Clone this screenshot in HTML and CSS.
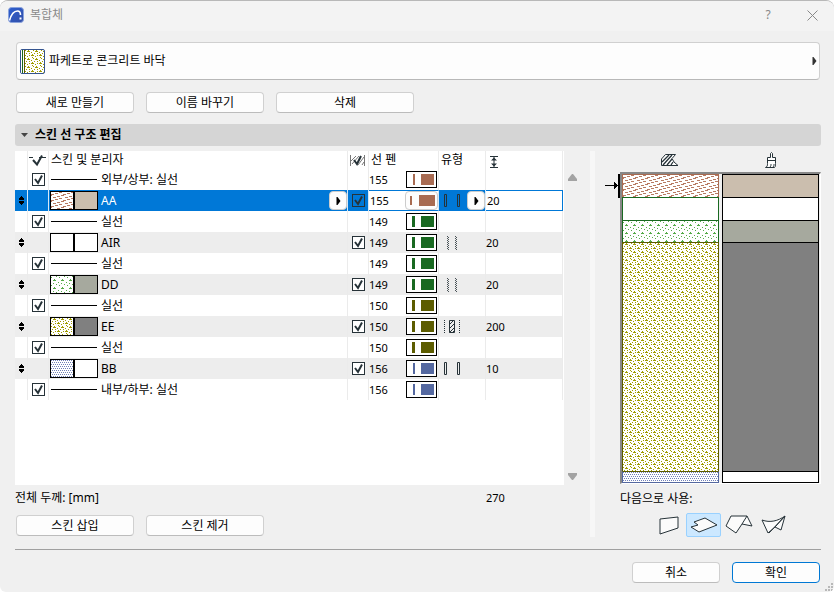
FILE: index.html
```html
<!DOCTYPE html>
<html lang="ko">
<head>
<meta charset="utf-8">
<title>복합체</title>
<meta name="viewport" content="width=device-width, initial-scale=1">
<link rel="stylesheet" href="styles.css">
</head>
<body>
<svg class="defs" aria-hidden="true">
  <symbol id="grip" viewBox="0 0 5 9"><path d="M2 0h1v1h1v1h1v2H0V2h1V1h1zM0 5h5v2H4v1H3v1H2V8H1V7H0z"/></symbol>
  <symbol id="finish" viewBox="0 0 24 14"><g fill="none" stroke="#263238"><path d="M3.500 .5h2v12h-2zM16.500 .5h2v12h-2z"/></g></symbol>
  <symbol id="other" viewBox="0 0 24 14"><g fill="none" stroke="#4a5358" stroke-dasharray="1 1"><path d="M6.500 0v14M14.500 0v14"/><path d="M7.500 1v13M15.500 1v13"/></g></symbol>
  <symbol id="core" viewBox="0 0 24 14"><g fill="none" stroke="#263238"><path d="M3.500 0v14M18.500 0v14" stroke-dasharray="1 1"/><path d="M8.500 .5h5v12h-5zM8.500 4.500l4-4M8.500 8.500l5-5M8.500 12.500l5-5M11.500 12.500l2-2"/></g></symbol>
  <symbol id="next" viewBox="0 0 4 8"><path d="M0 0h1l3 4-3 4H0z"/></symbol>
</svg>
<main class="dialog">
  <header class="titlebar">
    <svg class="logo" viewBox="0 0 16 16"><defs><linearGradient id="lg" x2="1" y2="1"><stop stop-color="#2d5fd0"/><stop offset="1" stop-color="#3450a8"/></linearGradient></defs><rect x=".5" y=".5" width="15" height="15" rx="3" fill="url(#lg)" stroke="#8aa3dc"/><path d="M1.500 13.500C3 8 6 4 9.500 4c2 0 3 1 3 4" fill="none" stroke="#fff" stroke-width="1.600"/><rect x="11.500" y="10.500" width="2" height="2" fill="#fff"/></svg>
    <h1>복합체</h1>
    <button class="caption" type="button" aria-label="도움말">?</button>
    <button class="caption" type="button" aria-label="닫기"><svg width="11" height="11" viewBox="0 0 11 11"><path d="M.5 .5l10 10M10.500 .5l-10 10" stroke="#888" fill="none"/></svg></button>
  </header>

  <div class="content">
    <button class="picker" type="button">
      <span class="thumb"><i class="thumb-edge"></i><i class="thumb-fill pat-ee"></i></span>
      <span class="picker-name">파케트로 콘크리트 바닥</span>
      <svg width="5" height="8" fill="#333"><use href="#next"/></svg>
    </button>

    <div class="actions">
      <button class="btn" type="button">새로 만들기</button>
      <button class="btn" type="button">이름 바꾸기</button>
      <button class="btn wide" type="button">삭제</button>
    </div>

    <button class="section" type="button" aria-expanded="true"><svg width="7" height="4" viewBox="0 0 7 4"><path d="M0 0h7L3.500 4z" fill="#444"/></svg>스킨 선 구조 편집</button>

    <div class="editor">
      <section class="list">
        <div class="table-area">
          <table>
            <colgroup><col class="c-grip"><col class="c-chk"><col><col class="c-chk"><col class="c-pen"><col class="c-type"><col class="c-thick"></colgroup>
            <thead>
              <tr>
                <th></th>
                <th class="ico"><svg width="17" height="13" viewBox="0 0 17 13"><path d="M0 3.500h4M10 3.500h7" stroke="#263238"/><path d="M4 6l4 4.500 5-9" fill="none" stroke="#263238" stroke-width="2"/></svg></th>
                <th>스킨 및 분리자</th>
                <th class="ico"><svg width="17" height="11" viewBox="0 0 17 11"><path d="M1.500 0v11M15.500 0v11M2 6l5-5M3 9l7-8M9 10l6-8M13 10l2-3" stroke="#777" fill="none"/><path d="M5 5l3 4 4-8" fill="none" stroke="#263238" stroke-width="2"/></svg></th>
                <th>선 펜</th>
                <th>유형</th>
                <th class="ico thick"><svg width="8" height="12" viewBox="0 0 8 12"><path d="M0 .5h8M0 11.500h8M4 1v10" stroke="#263238"/><path d="M1 4.500l3-3 3 3zM1 7.500l3 3 3-3z" fill="#263238"/></svg></th>
              </tr>
            </thead>
            <tbody>
              <tr><td></td><td><input type="checkbox" checked aria-label="외부/상부 표시"></td><td><div class="name"><i class="line"></i>외부/상부: 실선</div></td><td></td><td><div class="pen"><span class="num">155</span><i class="swatch p155"></i></div></td><td></td><td></td></tr>
              <tr class="skin selected"><td><svg class="grip"><use href="#grip"/></svg></td><td></td><td><div class="name"><i class="fill pat-aa"></i><i class="fill last bg-aa"></i>AA<button class="step end" type="button" aria-label="재질 선택"><svg width="5" height="8"><use href="#next"/></svg></button></div></td><td><input type="checkbox" checked aria-label="AA 끝 선"></td><td class="edit"><div class="pen"><input class="value" type="text" value="155" aria-label="선 펜"><button class="pen-button" type="button" aria-label="펜 색상"><i class="swatch p155"></i></button></div></td><td><div class="type"><svg width="24" height="14"><use href="#finish"/></svg><button class="step" type="button" aria-label="유형 선택"><svg width="5" height="8"><use href="#next"/></svg></button></div></td><td class="edit"><input class="value" type="text" value="20" aria-label="두께"></td></tr>
              <tr><td></td><td><input type="checkbox" checked aria-label="분리자 1 표시"></td><td><div class="name"><i class="line"></i>실선</div></td><td></td><td><div class="pen"><span class="num">149</span><i class="swatch p149"></i></div></td><td></td><td></td></tr>
              <tr class="skin"><td><svg class="grip"><use href="#grip"/></svg></td><td></td><td><div class="name"><i class="fill"></i><i class="fill last"></i>AIR</div></td><td><input type="checkbox" checked aria-label="AIR 끝 선"></td><td><div class="pen"><span class="num">149</span><i class="swatch p149"></i></div></td><td><div class="type"><svg width="24" height="14"><use href="#other"/></svg></div></td><td class="num">20</td></tr>
              <tr><td></td><td><input type="checkbox" checked aria-label="분리자 2 표시"></td><td><div class="name"><i class="line"></i>실선</div></td><td></td><td><div class="pen"><span class="num">149</span><i class="swatch p149"></i></div></td><td></td><td></td></tr>
              <tr class="skin"><td><svg class="grip"><use href="#grip"/></svg></td><td></td><td><div class="name"><i class="fill pat-dd"></i><i class="fill last bg-dd"></i>DD</div></td><td><input type="checkbox" checked aria-label="DD 끝 선"></td><td><div class="pen"><span class="num">149</span><i class="swatch p149"></i></div></td><td><div class="type"><svg width="24" height="14"><use href="#other"/></svg></div></td><td class="num">20</td></tr>
              <tr><td></td><td><input type="checkbox" checked aria-label="분리자 3 표시"></td><td><div class="name"><i class="line"></i>실선</div></td><td></td><td><div class="pen"><span class="num">150</span><i class="swatch p150"></i></div></td><td></td><td></td></tr>
              <tr class="skin"><td><svg class="grip"><use href="#grip"/></svg></td><td></td><td><div class="name"><i class="fill pat-ee"></i><i class="fill last bg-ee"></i>EE</div></td><td><input type="checkbox" checked aria-label="EE 끝 선"></td><td><div class="pen"><span class="num">150</span><i class="swatch p150"></i></div></td><td><div class="type"><svg width="24" height="14"><use href="#core"/></svg></div></td><td class="num">200</td></tr>
              <tr><td></td><td><input type="checkbox" checked aria-label="분리자 4 표시"></td><td><div class="name"><i class="line"></i>실선</div></td><td></td><td><div class="pen"><span class="num">150</span><i class="swatch p150"></i></div></td><td></td><td></td></tr>
              <tr class="skin"><td><svg class="grip"><use href="#grip"/></svg></td><td></td><td><div class="name"><i class="fill pat-bb"></i><i class="fill last"></i>BB</div></td><td><input type="checkbox" checked aria-label="BB 끝 선"></td><td><div class="pen"><span class="num">156</span><i class="swatch p156"></i></div></td><td><div class="type"><svg width="24" height="14"><use href="#finish"/></svg></div></td><td class="num">10</td></tr>
              <tr><td></td><td><input type="checkbox" checked aria-label="내부/하부 표시"></td><td><div class="name"><i class="line"></i>내부/하부: 실선</div></td><td></td><td><div class="pen"><span class="num">156</span><i class="swatch p156"></i></div></td><td></td><td></td></tr>
            </tbody>
          </table>
          <div class="scroll">
            <svg width="9" height="7" viewBox="0 0 9 7"><path d="M4 0h1l4 5v2H0V5z" fill="#a3a3a3"/></svg>
            <svg width="9" height="7" viewBox="0 0 9 7"><path d="M4 7h1l4-5V0H0v2z" fill="#a3a3a3"/></svg>
          </div>
        </div>
        <div class="total"><span>전체 두께: [mm]</span><span class="sum num">270</span></div>
        <div class="actions">
          <button class="btn" type="button">스킨 삽입</button>
          <button class="btn" type="button">스킨 제거</button>
        </div>
      </section>

      <div class="splitter"></div>

      <section class="side">
        <div class="side-head">
          <svg width="18" height="12" viewBox="0 0 18 12"><path d="M.5 11V5l4-4.500h10L11 4.500 13 8l4 3.500H.5z" fill="#fff" stroke="#263238"/><path d="M1 8l7-7M2 11l9-10M6 11l5-6M10 11l2-3" stroke="#263238" stroke-width="1.300" fill="none"/></svg>
          <svg width="12" height="16" viewBox="0 0 12 16"><path d="M5.500 5.500v-4l1-1 1 1v4h3v6c0 2 0 3-1 4H.5c2-1 2-2 2-4v-6h3M2.500 8.500h8M5 15c1-1 1-2 1-3M8 15c1-1 1-2 1-3" fill="#fff" stroke="#263238"/></svg>
        </div>
        <div class="preview-row">
          <svg class="marker" width="15" height="24" viewBox="0 0 15 24"><path d="M0 11h9V8h1v1h1v1h1v1h1V0h2v24h-2V12h-1v1h-1v1h-1v1H9v-3H0z"/></svg>
          <div class="preview">
            <div class="stack drawn"><div class="s1 pat-aa"></div><div class="s2"></div><div class="s3 pat-dd"></div><div class="s4 pat-ee"></div><div class="s5 pat-bb"></div></div>
            <div class="stack"><div class="s1 bg-aa"></div><div class="s2"></div><div class="s3 bg-dd"></div><div class="s4 bg-ee"></div><div class="s5"></div></div>
          </div>
        </div>
        <div class="use-label" id="use">다음으로 사용:</div>
        <div class="uses" role="group" aria-labelledby="use">
          <button type="button" aria-label="벽"><svg width="28" height="20" viewBox="0 0 28 20"><path d="M5 4l18-2v11L5 19z"/></svg></button>
          <button type="button" aria-label="슬래브" aria-pressed="true"><svg width="28" height="20" viewBox="0 0 28 20"><path d="M4 7l11-4 12 7-18 7-8-5 7-2z"/></svg></button>
          <button type="button" aria-label="지붕"><svg width="28" height="20" viewBox="0 0 28 20"><path d="M6 1h16l5 10-10-2-6 9L1 11zM22 1l-5 8"/></svg></button>
          <button type="button" aria-label="쉘"><svg width="28" height="20" viewBox="0 0 28 20"><path d="M2 5c8 3 16 1 23-4l-4 14-6-3-7 6zM25 1L9 18M25 1L15 12"/></svg></button>
        </div>
      </section>
    </div>

    <footer>
      <button class="btn short" type="button">취소</button>
      <button class="btn short primary" type="button">확인</button>
    </footer>
  </div>
  <svg class="resize" width="9" height="9" viewBox="0 0 9 9"><path d="M6 0h2v2H6zM3 3h2v2H3zM6 3h2v2H6zM0 6h2v2H0zM3 6h2v2H3zM6 6h2v2H6z" fill="#b8b8b8"/></svg>
</main>
</body>
</html>
```
FILE: styles.css
```css
* { box-sizing: border-box; }

body {
  margin: 0;
  background: #fff;
  color: #000;
  font: 12px/16px "Noto Sans", "Noto Sans CJK KR", sans-serif;
}

button, input { font: inherit; color: inherit; margin: 0; padding: 0; }
svg { display: block; flex: none; }
.defs { position: absolute; width: 0; height: 0; }

.dialog {
  position: relative;
  min-height: 100vh;
  background: #f0f0f0;
  border-top: 1px solid #b8b8b8;
  border-radius: 8px 8px 6px 6px;
  overflow: hidden;
}

/* title bar */
.titlebar {
  display: flex;
  align-items: center;
  height: 30px;
  padding: 0 0 2px 8px;
  background: #f3f3f3;
}
.logo { width: 16px; height: 16px; }
.titlebar h1 { flex: 1; margin: 0 0 0 6px; font-size: 12px; font-weight: 400; color: #8a8a8a; }
.caption {
  display: flex;
  align-items: center;
  justify-content: center;
  width: 44px;
  height: 28px;
  border: 0;
  background: none;
  color: #888;
}

.content { padding: 11px 13px 9px 15px; }

/* composite picker */
.picker {
  display: flex;
  align-items: center;
  width: calc(100% - 2px);
  height: 38px;
  margin-left: 1px;
  padding: 0 2px 0 3px;
  background: #fdfdfd;
  border: 1px solid #d0d0d0;
  border-bottom-color: #b8b8b8;
  border-radius: 4px;
}
.picker-name { flex: 1; margin-left: 4px; text-align: left; }
.thumb { display: flex; width: 25px; height: 25px; border: 1px solid #34548f; border-radius: 2px; overflow: hidden; background: #fff; }
.thumb-edge { width: 4px; background: linear-gradient(90deg, #fff 1px, #196619 1px 2px, #fff 2px 3px, #5c5c00 3px); }
.thumb-fill { flex: 1; }

.actions { display: flex; gap: 12px; margin: 12px 1px 0; }
.btn {
  width: 118px;
  height: 21px;
  background: #fdfdfd;
  border: 1px solid #d0d0d0;
  border-bottom-color: #bcbcbc;
  border-radius: 4px;
  line-height: 17px;
}
.btn.wide { width: 138px; }
.btn.short { width: 88px; }
.btn.primary { border-color: #0078d4; }

.section {
  display: flex;
  align-items: center;
  gap: 7px;
  width: 100%;
  height: 22px;
  margin-top: 11px;
  padding: 0 6px;
  background: #d5d5d5;
  border: 0;
  border-radius: 3px;
  font-weight: 700;
}

.editor { display: flex; margin-top: 5px; }
.list { flex: 1; min-width: 0; }
.table-area {
  display: flex;
  align-items: flex-start;
  height: 334px;
  margin-right: 10px;
  background: linear-gradient(#fff, #fff) no-repeat 0 0 / calc(100% - 16px) 100%;
}

/* skin table */
table { flex: 1; width: 0; table-layout: fixed; border-collapse: separate; border-spacing: 0; }
.c-grip { width: 13px; }
.c-chk { width: 21px; }
.c-pen { width: 70px; }
.c-type { width: 47px; }
.c-thick { width: 77px; }
th, td { height: 21px; padding: 0; border-right: 1px solid #ebebeb; text-align: left; font-weight: 400; white-space: nowrap; }
th { height: 18px; padding: 0 2px; line-height: 16px; }
th svg { margin: auto; }
th.thick svg { margin: 3px 0 0 3px; }
th.ico { padding-left: 1px; }
.skin td { background: #ededed; }
.num, .value { font-size: 11px; }

.grip { width: 5px; height: 9px; margin-left: 4px; }
input[type="checkbox"] {
  display: block;
  appearance: none;
  width: 13px;
  height: 13px;
  margin-left: 4px;
  border: 1px solid #263238;
  background: #fff;
}
input[type="checkbox"]:checked {
  background-image: url("data:image/svg+xml,%3Csvg xmlns='http://www.w3.org/2000/svg' viewBox='0 0 11 11'%3E%3Cpath d='M2 5l3 4 4-7.500' fill='none' stroke='%23263238' stroke-width='2'/%3E%3C/svg%3E");
}

.name { display: flex; align-items: center; height: 21px; padding-left: 1px; }
.line { width: 46px; height: 1px; margin: 0 4px 0 1px; background: #000; }
.fill { width: 24px; height: 19px; border: 1px solid #000; background-color: #fff; }
.fill.last { margin-right: 3px; }
.pen { display: flex; align-items: center; justify-content: space-between; height: 21px; padding-right: 1px; }

.swatch {
  width: 31px;
  height: 17px;
  border: 1px solid #000;
  background-color: #fff;
  background-image: linear-gradient(var(--pen), var(--pen)), linear-gradient(var(--pen), var(--pen));
  background-position: 5px 2px, 14px 2px;
  background-size: 3px 11px, 13px 11px;
  background-repeat: no-repeat;
}
.p155 { --pen: #a86b52; background-position: 6px 2px, 14px 2px; background-size: 2px 11px, 13px 11px; }
.p149 { --pen: #196921; }
.p150 { --pen: #5c5c00; }
.p156 { --pen: #5468a0; background-position: 6px 2px, 14px 2px; background-size: 2px 11px, 13px 11px; }

.type { display: flex; align-items: center; justify-content: space-between; height: 21px; padding-left: 2px; }

.step {
  display: flex;
  align-items: center;
  justify-content: center;
  width: 18px;
  height: 19px;
  background: #fdfdfd;
  border: 1px solid #ccc;
  border-radius: 4px;
}
.step.end { margin-left: auto; }

.selected td { background: #0078d7; border-color: #d5e8f8; }
.selected .name { color: #fff; }
.selected .step { color: #000; }
.selected input[type="checkbox"] { background-color: transparent; }
.selected td.edit { background: #fff; border-top: 1px solid #0078d7; border-bottom: 1px solid #0078d7; }
.selected td.edit .pen { height: 19px; padding-right: 0; }
.selected td.edit:last-child { border-right: 1px solid #0078d7; }
.value { width: 40px; min-width: 0; height: 17px; padding: 0 1px; border: 0; background: none; outline: 0; }
td.edit:not(:last-child) .value { width: 34px; }
.pen-button { width: 33px; height: 19px; padding: 0; background: #fdfdfd; border: 1px solid #ccc; border-radius: 4px; overflow: hidden; }
.pen-button .swatch { display: block; border: 0; background-color: transparent; background-position: 4px 4px, 13px 3px; background-size: 2px 9px, 16px 11px; }

.scroll { display: flex; flex-direction: column; justify-content: space-between; align-items: center; width: 16px; height: 100%; padding: 23px 0 5px; margin-left: 1px; }

.total { display: flex; height: 26px; margin-right: 10px; align-items: center; }
.total span:first-child { flex: 1; }
.sum { width: 94px; }
.list .actions { margin-top: 4px; }

.splitter { width: 5px; height: 386px; background: #f7f7f7; }

/* preview */
.side { width: 226px; padding-left: 10px; }
.side-head { display: grid; grid-template-columns: 1fr 1fr; justify-items: center; align-items: center; height: 21px; margin-left: 15px; padding: 0 0 4px; }
.preview-row { display: flex; align-items: flex-start; }
.marker { margin-top: 2px; }
.preview {
  display: grid;
  grid-template-columns: 1fr 1fr;
  flex: 1;
  gap: 3px;
  padding-right: 1px;
  border: 1px solid #fff;
  border-top: 2px solid #888;
  border-left: 2px solid #888;
}
.stack { background: #fff; border: 1px solid #000; border-top: 0; }
.stack div { border-top: 1px solid #000; }
.s1, .s2 { height: 23px; }
.stack .s3 { height: 22px; }
.stack .s4 { height: 229px; }
.stack .s5 { height: 11px; }
.drawn { border-width: 0 0 1px; border-color: #5468a0; }
.stack.drawn div { border: 1px solid; border-bottom: 0; }
.stack.drawn .s1 { border-color: #a86b52; }
.stack.drawn .s2, .stack.drawn .s3 { border-color: #196921; }
.stack.drawn .s4 { border-color: #5c5c00; }
.stack.drawn .s5 { border-color: #5c5c00 #5468a0; }

.use-label { margin: 7px 0 6px 15px; }
.uses { display: flex; margin-left: 46px; }
.uses button { display: flex; align-items: center; justify-content: center; width: 35px; height: 24px; background: none; border: 1px solid transparent; border-radius: 2px; }
.uses button[aria-pressed="true"] { background: #cce8ff; border-color: #99d1ff; }
.uses path { fill: #fbfbfb; stroke: #263238; stroke-linejoin: round; }

footer { display: flex; justify-content: flex-end; gap: 12px; margin-top: 12px; padding: 12px 1px 0 0; border-top: 1px solid #a0a0a0; }
.resize { position: absolute; right: 0; bottom: 0; }

/* fills */
.bg-aa { background: #cbbeae; }
.bg-dd { background: #a6a99e; }
.bg-ee { background: #808080; }
.pat-aa { background-image: url("data:image/svg+xml,%3Csvg xmlns='http://www.w3.org/2000/svg' width='12' height='6'%3E%3Cpath d='M0 2h3v1H0zM4 1h3v1H4zM8 0h3v1H8zM2 5h3v1H2zM6 4h3v1H6zM10 3h2v1h-2zM0 3h1v1H0z' fill='%23b87a62'/%3E%3C/svg%3E"); }
.pat-dd { background-image: url("data:image/svg+xml,%3Csvg xmlns='http://www.w3.org/2000/svg' width='8' height='8'%3E%3Cpath d='M3 3h1v1h1v1H2V4h1zM0 1h1v1H0zM5 0h1v1H5zM7 6h1v1H7zM2 7h1v1H2z' fill='%2355ab48'/%3E%3C/svg%3E"); }
.pat-ee { background-image: url("data:image/svg+xml,%3Csvg xmlns='http://www.w3.org/2000/svg' width='8' height='8'%3E%3Cpath d='M3 0h1v1h1v1H2V1h1zM7 4h1v2H6V5h1zM0 5h1v1H0zM0 0h1v1H0zM6 2h1v1H6zM1 3h1v1H1zM4 3h1v1H4zM2 6h1v1H2zM4 5h1v1H4zM7 7h1v1H7z' fill='%23a09c00'/%3E%3C/svg%3E"); }
.pat-bb { background-image: url("data:image/svg+xml,%3Csvg xmlns='http://www.w3.org/2000/svg' width='2' height='4'%3E%3Cpath d='M0 0h1v1H0zM1 2h1v1H1z' fill='%237080b8'/%3E%3C/svg%3E"); }
```
